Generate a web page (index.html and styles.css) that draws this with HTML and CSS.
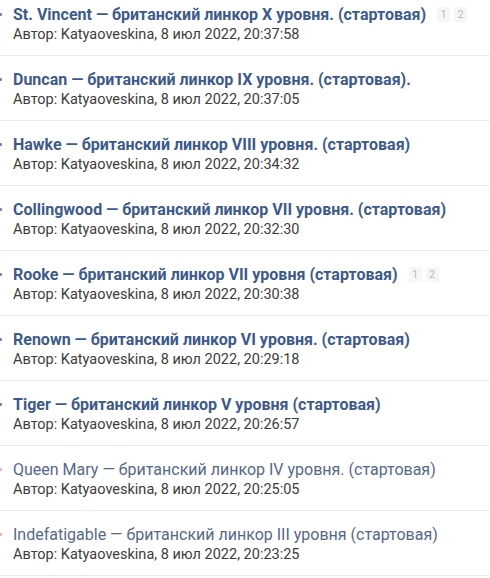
FILE: index.html
```html
<!DOCTYPE html>
<html lang="ru">
<head>
    <meta charset="UTF-8">
    <title>Темы</title>
    <link rel="stylesheet" href="styles.css">
</head>
<body>
    <ul class="topic-list">
        <li class="topic">
            <span class="marker"></span>
            <div class="topic-body">
                <div class="topic-title">
                    <a href="#">St. Vincent — британский линкор X уровня. (стартовая)</a>
                    <span class="pages"><span>1</span><span>2</span></span>
                </div>
                <div class="topic-meta">Автор: Katyaoveskina, 8 июл 2022, 20:37:58</div>
            </div>
        </li>
        <li class="topic">
            <span class="marker"></span>
            <div class="topic-body">
                <div class="topic-title"><a href="#">Duncan — британский линкор IX уровня. (стартовая).</a></div>
                <div class="topic-meta">Автор: Katyaoveskina, 8 июл 2022, 20:37:05</div>
            </div>
        </li>
        <li class="topic">
            <span class="marker"></span>
            <div class="topic-body">
                <div class="topic-title"><a href="#">Hawke — британский линкор VIII уровня. (стартовая)</a></div>
                <div class="topic-meta">Автор: Katyaoveskina, 8 июл 2022, 20:34:32</div>
            </div>
        </li>
        <li class="topic">
            <span class="marker"></span>
            <div class="topic-body">
                <div class="topic-title"><a href="#">Collingwood — британский линкор VII уровня. (стартовая)</a></div>
                <div class="topic-meta">Автор: Katyaoveskina, 8 июл 2022, 20:32:30</div>
            </div>
        </li>
        <li class="topic">
            <span class="marker"></span>
            <div class="topic-body">
                <div class="topic-title">
                    <a href="#">Rooke — британский линкор VII уровня (стартовая)</a>
                    <span class="pages"><span>1</span><span>2</span></span>
                </div>
                <div class="topic-meta">Автор: Katyaoveskina, 8 июл 2022, 20:30:38</div>
            </div>
        </li>
        <li class="topic">
            <span class="marker"></span>
            <div class="topic-body">
                <div class="topic-title"><a href="#">Renown — британский линкор VI уровня. (стартовая)</a></div>
                <div class="topic-meta">Автор: Katyaoveskina, 8 июл 2022, 20:29:18</div>
            </div>
        </li>
        <li class="topic">
            <span class="marker"></span>
            <div class="topic-body">
                <div class="topic-title"><a href="#">Tiger — британский линкор V уровня (стартовая)</a></div>
                <div class="topic-meta">Автор: Katyaoveskina, 8 июл 2022, 20:26:57</div>
            </div>
        </li>
        <li class="topic read">
            <span class="marker"></span>
            <div class="topic-body">
                <div class="topic-title"><a href="#">Queen Mary — британский линкор IV уровня. (стартовая)</a></div>
                <div class="topic-meta">Автор: Katyaoveskina, 8 июл 2022, 20:25:05</div>
            </div>
        </li>
        <li class="topic read">
            <span class="marker"></span>
            <div class="topic-body">
                <div class="topic-title"><a href="#">Indefatigable — британский линкор III уровня (стартовая)</a></div>
                <div class="topic-meta">Автор: Katyaoveskina, 8 июл 2022, 20:23:25</div>
            </div>
        </li>
    </ul>
</body>
</html>
```

FILE: styles.css
```css
body {
    margin: 0;
    background-color: #ffffff;
    font-family: Roboto, "Noto Sans", Arial, sans-serif;
    overflow: hidden;
}

.topic-list {
    list-style: none;
    margin: -9px 1px 0 0;
    padding: 0;
}

.topic {
    display: flex;
    align-items: flex-start;
    height: 64px;
    border-bottom: 1px solid #e9e9e9;
}

/* status icon, mostly cut off at the left edge */
.marker {
    width: 8px;
    height: 3px;
    margin: 22px 11px 0 -6px;
    background-color: #6f84a8;
    border-radius: 1px;
}

.topic.read .marker {
    background-color: #f2a9c0;
}

.topic-body {
    padding-top: 13px;
}

.topic-title {
    display: flex;
    align-items: center;
    height: 20px;
}

.topic-title a {
    color: #3d5a8a;
    font-size: 16px;
    font-weight: bold;
    text-decoration: none;
    white-space: nowrap;
}

.topic.read .topic-title a {
    color: #56688a;
    font-weight: normal;
}

.pages {
    display: flex;
    gap: 4px;
    margin-left: 11px;
}

.pages span {
    width: 13px;
    height: 15px;
    line-height: 15px;
    text-align: center;
    font-size: 11px;
    color: #b9b9b9;
    background-color: #f6f6f6;
}

.topic-meta {
    margin-top: 1px;
    font-size: 14.5px;
    line-height: 19px;
    color: #3c3c3c;
    white-space: nowrap;
}
```
